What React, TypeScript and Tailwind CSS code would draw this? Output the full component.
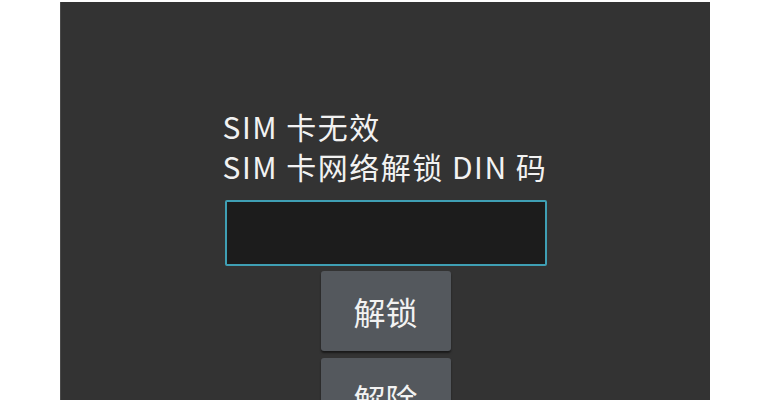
export default function App() {
  const font = { fontFamily: '"Noto Sans CJK SC", "Noto Sans", sans-serif' };
  return (
    <div className="w-[757px] h-[400px] bg-white overflow-hidden">
      <div className="ml-[60px] mt-[2px] w-[650px] h-[398px] bg-[#333333] border-l border-[#4a4a4a] flex flex-col items-center overflow-hidden" style={font}>
        <div className="shrink-0 w-[324px] mt-[104px] text-[#f2f2f2] text-[30px] leading-[40px] tracking-[1.5px] whitespace-nowrap -ml-[2px]">
          <div>SIM 卡无效</div>
          <div>SIM 卡网络解锁 DIN 码</div>
        </div>
        <div className="shrink-0 mt-[14px] w-[322px] h-[66px] bg-[#1c1c1c] border-2 border-[#3f9fb4] rounded-[2px]"></div>
        <div className="shrink-0 mt-[5px] w-[130px] h-[80px] bg-[#54585d] rounded-[3px] shadow-[0_2px_2px_rgba(0,0,0,0.5)] flex items-center justify-center text-[#f2f2f2] text-[32px]">
          解锁
        </div>
        <div className="shrink-0 mt-[7px] w-[130px] h-[80px] bg-[#54585d] rounded-[3px] shadow-[0_2px_2px_rgba(0,0,0,0.5)] flex items-center justify-center text-[#f2f2f2] text-[32px]">
          解除
        </div>
      </div>
    </div>
  );
}
